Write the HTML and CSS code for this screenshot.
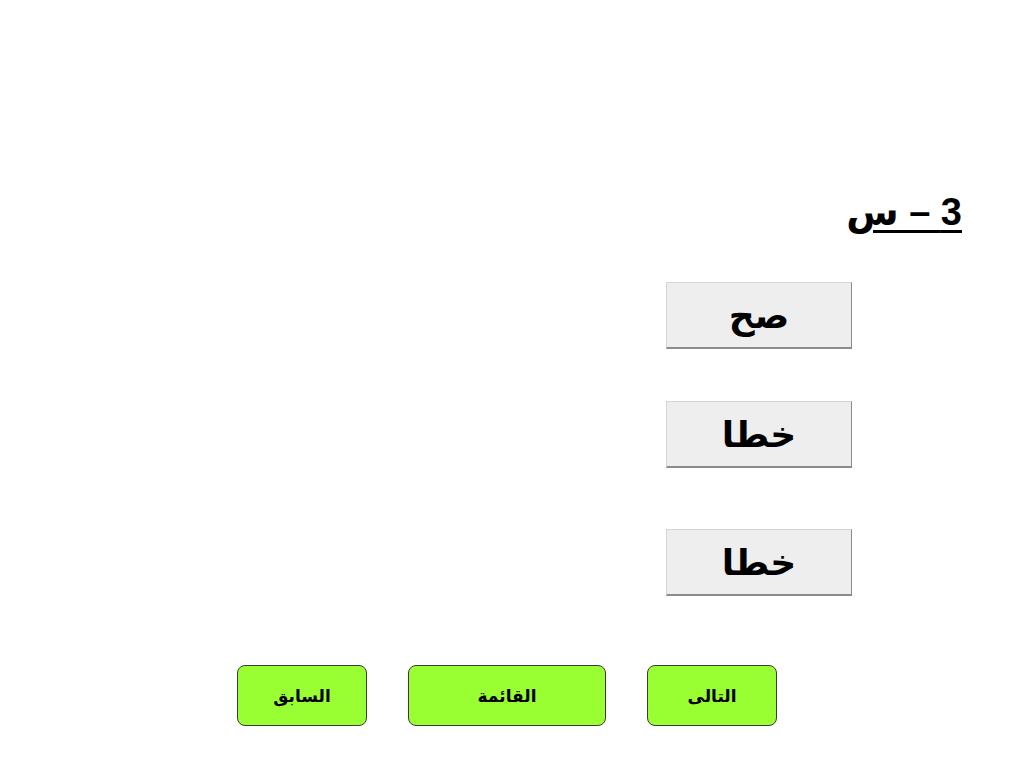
FILE: index.html
```html
<!DOCTYPE html>
<html lang="ar" dir="rtl">
<head>
  <meta charset="utf-8">
  <title>س 3</title>
  <link rel="stylesheet" href="styles.css">
</head>
<body>
  <div class="slide">
    <h1 class="question">3 – س</h1>
    <div class="answers">
      <div class="answer first">صح</div>
      <div class="answer second">خطا</div>
      <div class="answer third">خطا</div>
    </div>
    <div class="nav">
      <a class="nav-btn small" href="#">التالى</a>
      <a class="nav-btn wide" href="#">القائمة</a>
      <a class="nav-btn small" href="#">السابق</a>
    </div>
  </div>
</body>
</html>
```

FILE: styles.css
```css
/* page */
body {
  margin: 0;
  background: #ffffff;
  font-family: "Liberation Sans", "DejaVu Sans", sans-serif;
  color: #000000;
}
.slide {
  width: 1024px;
  height: 768px;
  overflow: hidden;
}

/* question title */
.question {
  margin: 190px 62px 0 0;
  font-size: 38px;
  font-weight: bold;
  line-height: 44px;
  text-decoration: underline;
  text-decoration-thickness: 3px;
  text-underline-offset: 5px;
}

/* answer boxes */
.answers {
  display: flex;
  flex-direction: column;
  margin-right: 172px;
}
.answer {
  width: 184px;
  height: 64px;
  background: #eeeeee;
  border-top: 1px solid #d6d6d6;
  border-left: 1px solid #d6d6d6;
  border-right: 1px solid #8c8c8c;
  border-bottom: 2px solid #8c8c8c;
  font-family: "DejaVu Sans", sans-serif;
  font-size: 36px;
  font-weight: bold;
  display: flex;
  align-items: center;
  justify-content: center;
}
.first { margin-top: 48px; }
.second { margin-top: 52px; }
.third { margin-top: 61px; }

/* bottom navigation */
.nav {
  display: flex;
  gap: 41px;
  margin: 69px 247px 0 0;
}
.nav-btn {
  height: 59px;
  background: #99ff33;
  border: 1px solid #3a3a3a;
  border-radius: 8px;
  color: #000000;
  text-decoration: none;
  font-family: "DejaVu Sans", sans-serif;
  font-size: 17px;
  font-weight: bold;
  display: flex;
  align-items: center;
  justify-content: center;
}
.small { width: 128px; }
.wide { width: 196px; }
```
